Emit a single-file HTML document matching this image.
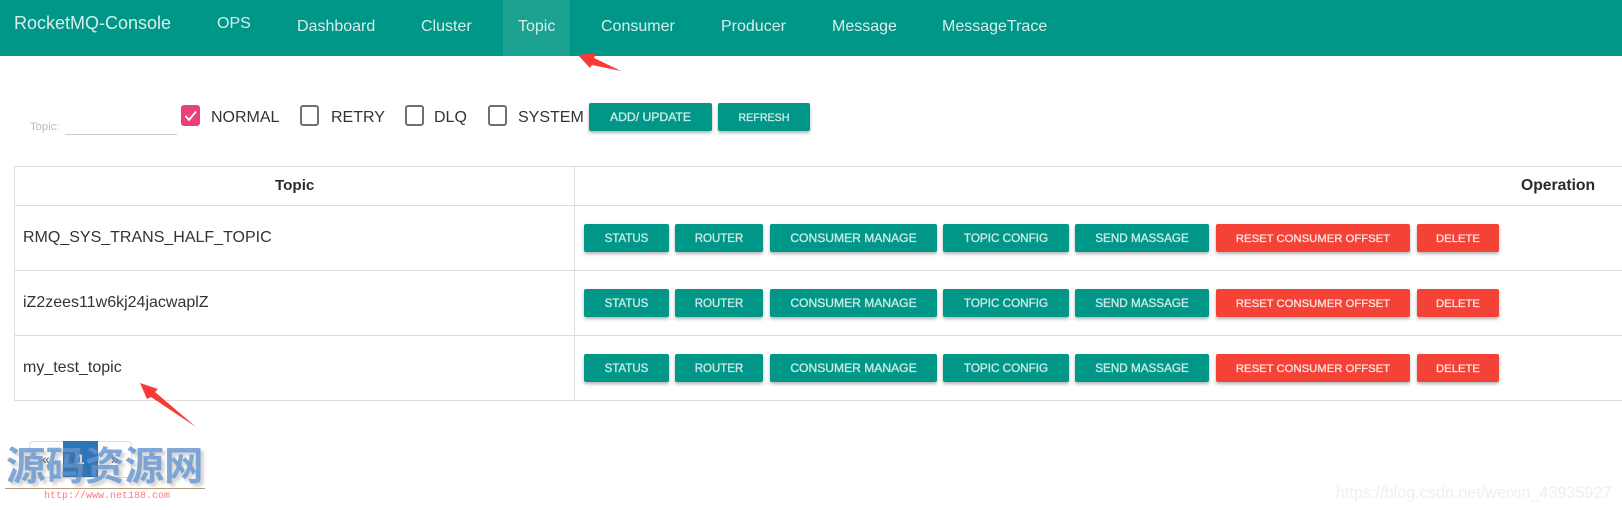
<!DOCTYPE html>
<html><head><meta charset="utf-8">
<style>
html,body{margin:0;padding:0;background:#fff}
body{width:1622px;height:510px;overflow:hidden;position:relative;font-family:"Liberation Sans",Arial,sans-serif;color:#2b2b2b}
.a{position:absolute;white-space:nowrap}
.nav{left:0;top:0;width:1622px;height:56px;background:#009688}
.tab{left:503px;top:0;width:67px;height:56px;background:#1aa190}
.n{color:#d6efeb;font-size:16px;line-height:20px}
.b{position:absolute;height:28px;line-height:29px;text-align:center;background:#009688;color:#c8ebe5;font-size:11.7px;border-radius:2px;box-shadow:0 2px 3px rgba(0,0,0,.3);font-family:"Liberation Sans",sans-serif;font-weight:400;-webkit-text-stroke:.35px currentColor;white-space:nowrap}
.r{background:#f44336;color:#fde0dd}
.c{font-size:12.1px}
.o{font-size:11.3px;line-height:30px}
.s{font-size:11.5px;line-height:30px}
.cb{position:absolute;width:15px;height:17px;border:2px solid #707070;border-radius:3px;top:105px}
.l{font-size:16px;line-height:20px;top:107.5px;color:#333}
.h{background:#ddd}
.t{font-size:16px;line-height:20px;left:23px;color:#333}
</style></head><body>
<div class="a nav"></div><div class="a tab"></div>
<div class="a n" style="left:14px;top:13px;font-size:18px">RocketMQ-Console</div>
<div class="a n" style="left:217px;top:13.5px">OPS</div>
<div class="a n" style="left:297px;top:16.5px">Dashboard</div>
<div class="a n" style="left:421px;top:16.5px">Cluster</div>
<div class="a n" style="left:518px;top:16.5px">Topic</div>
<div class="a n" style="left:601px;top:16.5px">Consumer</div>
<div class="a n" style="left:721px;top:16.5px">Producer</div>
<div class="a n" style="left:832px;top:16.5px">Message</div>
<div class="a n" style="left:942px;top:16.5px">MessageTrace</div>

<div class="a" style="left:30px;top:119.5px;font-size:11.3px;line-height:14px;color:#bbb">Topic:</div>
<div class="a" style="left:65px;top:134px;width:112px;height:1px;background:#ccc"></div>

<div class="cb" style="left:181px;background:#ec407a;border-color:#ec407a"></div>
<svg class="a" style="left:181px;top:105px" width="19" height="21" viewBox="0 0 19 21"><path d="M4.5 11 L8 15 L15 6.5" fill="none" stroke="#fff" stroke-width="1.8"/></svg>
<div class="a l" style="left:211px">NORMAL</div>
<div class="cb" style="left:300px"></div><div class="a l" style="left:331px">RETRY</div>
<div class="cb" style="left:405px"></div><div class="a l" style="left:434px">DLQ</div>
<div class="cb" style="left:488px"></div><div class="a l" style="left:518px">SYSTEM</div>
<div class="b" style="left:589px;top:103px;width:123px;font-size:12.2px">ADD/ UPDATE</div>
<div class="b" style="left:718px;top:103px;width:92px;font-size:10.7px;line-height:30px">REFRESH</div>

<!-- table -->
<div class="a h" style="left:14px;top:166px;width:1608px;height:1px"></div>
<div class="a h" style="left:14px;top:205px;width:1608px;height:1px"></div>
<div class="a h" style="left:14px;top:270px;width:1608px;height:1px"></div>
<div class="a h" style="left:14px;top:335px;width:1608px;height:1px"></div>
<div class="a h" style="left:14px;top:400px;width:1608px;height:1px"></div>
<div class="a h" style="left:14px;top:166px;width:1px;height:235px"></div>
<div class="a h" style="left:574px;top:166px;width:1px;height:235px"></div>
<div class="a" style="left:275px;top:176px;font-size:15.2px;font-weight:700;line-height:20px">Topic</div>
<div class="a" style="left:1521px;top:176px;font-size:15.7px;font-weight:700;line-height:20px">Operation</div>
<div class="a t" style="top:228px">RMQ_SYS_TRANS_HALF_TOPIC</div>
<div class="a t" style="top:292.5px">iZ2zees11w6kj24jacwaplZ</div>
<div class="a t" style="top:357.5px">my_test_topic</div>

<div class="b s" style="left:584px;top:224px;width:85px">STATUS</div>
<div class="b s" style="left:675px;top:224px;width:88px">ROUTER</div>
<div class="b c" style="left:770px;top:224px;width:167px">CONSUMER MANAGE</div>
<div class="b" style="left:943px;top:224px;width:126px">TOPIC CONFIG</div>
<div class="b" style="left:1075px;top:224px;width:134px">SEND MASSAGE</div>
<div class="b r o" style="left:1216px;top:224px;width:194px">RESET CONSUMER OFFSET</div>
<div class="b r o" style="left:1417px;top:224px;width:82px">DELETE</div>

<div class="b s" style="left:584px;top:289px;width:85px">STATUS</div>
<div class="b s" style="left:675px;top:289px;width:88px">ROUTER</div>
<div class="b c" style="left:770px;top:289px;width:167px">CONSUMER MANAGE</div>
<div class="b" style="left:943px;top:289px;width:126px">TOPIC CONFIG</div>
<div class="b" style="left:1075px;top:289px;width:134px">SEND MASSAGE</div>
<div class="b r o" style="left:1216px;top:289px;width:194px">RESET CONSUMER OFFSET</div>
<div class="b r o" style="left:1417px;top:289px;width:82px">DELETE</div>

<div class="b s" style="left:584px;top:354px;width:85px">STATUS</div>
<div class="b s" style="left:675px;top:354px;width:88px">ROUTER</div>
<div class="b c" style="left:770px;top:354px;width:167px">CONSUMER MANAGE</div>
<div class="b" style="left:943px;top:354px;width:126px">TOPIC CONFIG</div>
<div class="b" style="left:1075px;top:354px;width:134px">SEND MASSAGE</div>
<div class="b r o" style="left:1216px;top:354px;width:194px">RESET CONSUMER OFFSET</div>
<div class="b r o" style="left:1417px;top:354px;width:82px">DELETE</div>

<!-- red arrows -->
<svg class="a" style="left:0;top:0" width="1622" height="510">
<path d="M578 55 L596 53 L594 58 L621 71 L592 65 L590 68 Z" fill="#f93a36"/>
<path d="M140 383 L158 389 L155 392 L196 427 L151 397 L147 399 Z" fill="#f93a36"/>
</svg>

<!-- pagination -->
<div class="a" style="left:29px;top:441px;width:101px;height:35px;border:1px solid #ddd;border-radius:4px"></div>
<div class="a" style="left:63px;top:441px;width:35px;height:36px;background:#2b75bb;color:#fff;font-size:14px;font-weight:700;line-height:36px;text-align:center">1</div>
<div class="a" style="left:42px;top:450px;font-size:14px;line-height:18px;color:#555">«</div>
<div class="a" style="left:111px;top:450px;font-size:14px;line-height:18px;color:#555">»</div>

<!-- watermark -->
<div class="a" style="left:6px;top:441px;font-family:'Noto Sans CJK SC','WenQuanYi Zen Hei',sans-serif;font-weight:700;font-size:39.5px;line-height:46px;color:rgba(98,148,208,.8);text-shadow:3px 3px 3px rgba(120,120,120,.35)">源码资源网</div>
<div class="a" style="left:5px;top:488px;width:200px;height:1px;background:#b09a7c"></div>
<div class="a" style="left:44px;top:491px;font-family:'Liberation Mono',monospace;font-size:10px;line-height:12px;color:#ff7b7b">http://www.net188.com</div>

<div class="a" style="left:1336px;top:483.5px;font-size:16.2px;line-height:18px;color:#efefef">https://blog.csdn.net/weixin_43935927</div>
</body></html>
